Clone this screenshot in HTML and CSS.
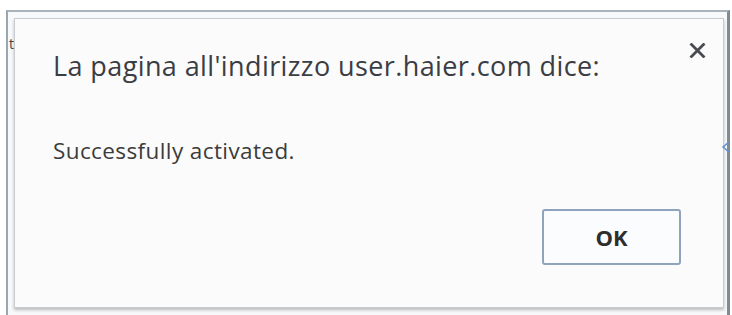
FILE: index.html
```html
<!DOCTYPE html>
<html>
<head>
<meta charset="utf-8">
<link rel="stylesheet" href="styles.css">
</head>
<body>
<div class="page">
  <div class="frame">
    <span class="behind">t</span>
    <div class="dialog">
      <div class="head">
        <h1 class="title">La pagina all'indirizzo user.haier.com dice:</h1>
        <svg class="close" width="17" height="15" viewBox="0 0 17 15"><path d="M2.5 1.5 L14.5 13.5 M14.5 1.5 L2.5 13.5" stroke="#484b50" stroke-width="2.8" stroke-linecap="square" fill="none"/></svg>
      </div>
      <p class="msg">Successfully activated.</p>
      <div class="actions">
        <button class="ok">OK</button>
      </div>
    </div>
    <svg class="arrow" width="12" height="14" viewBox="0 0 12 14"><path d="M9 2 L3 7 L9 12" fill="none" stroke="#5b8fd0" stroke-width="1.5"/></svg>
  </div>
</div>
</body>
</html>
```
FILE: styles.css
```css
html, body {
  margin: 0;
  padding: 0;
  background: #ffffff;
  width: 732px;
  height: 315px;
  overflow: hidden;
}
.page {
  padding: 10px 2px 0 6px;
  height: 305px;
}
.frame {
  position: relative;
  height: 100%;
  border-top: 2px solid #a9b3bc;
  border-left: 2px solid #9aa6b0;
  border-right: 3px solid #7f8c96;
  background: #f7f9fa;
  padding: 6px 3px 0 6px;
  box-sizing: border-box;
}
.behind {
  position: absolute;
  left: 1px;
  top: 22px;
  font: 14px "Open Sans", sans-serif;
  color: #444;
}
.dialog {
  position: relative;
  height: 290px;
  background: #fbfbfb;
  border: 1px solid #c9cdd1;
  box-shadow: 0 2px 3px rgba(0,0,0,0.25);
  box-sizing: border-box;
  font-family: "Open Sans", "Noto Sans", sans-serif;
  color: #333;
  padding: 0 0 0 38px;
}
.head {
  display: flex;
  justify-content: space-between;
  align-items: flex-start;
  padding-top: 29px;
}
.title {
  margin: 0;
  font-weight: normal;
  font-size: 27px;
  letter-spacing: 0.4px;
  line-height: 36px;
  color: #3a3d44;
}
.close {
  margin-top: -5px;
  margin-right: 17px;
}
.msg {
  margin: 53px 0 0 0;
  font-size: 22.5px;
  letter-spacing: 0.4px;
  line-height: 28px;
  color: #3c3c3c;
}
.actions {
  display: flex;
  justify-content: flex-end;
  padding-right: 42px;
  margin-top: 44px;
}
.ok {
  width: 139px;
  height: 56px;
  background: #fbfcfe;
  border: 2px solid #8fa3be;
  border-radius: 3px;
  font-family: "Open Sans", sans-serif;
  font-weight: bold;
  font-size: 22px;
  color: #2e2e2e;
}
.arrow {
  position: absolute;
  right: -5px;
  top: 128px;
}
```
